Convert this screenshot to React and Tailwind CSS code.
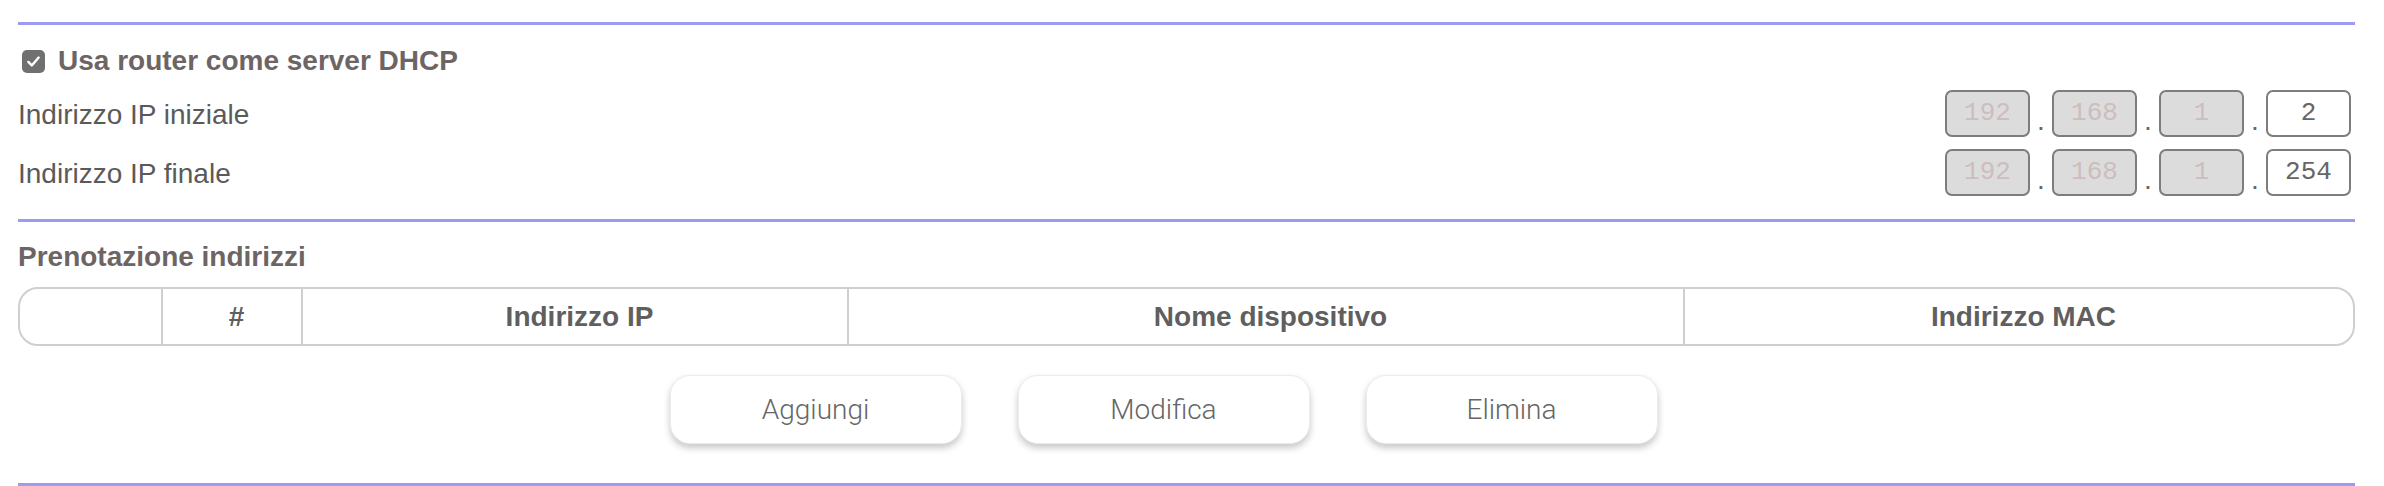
import React from "react"

const ranges = [
  { label: "Indirizzo IP iniziale", parts: ["192", "168", "1", "2"] },
  { label: "Indirizzo IP finale", parts: ["192", "168", "1", "254"] },
]

const columns = ["", "#", "Indirizzo IP", "Nome dispositivo", "Indirizzo MAC"]

function IpBox({ value, disabled }) {
  return (
    <div
      className={`w-[85px] h-[47px] flex items-center justify-center rounded-[7px] border-2 border-[#7d7d7d] text-[26px] ${
        disabled ? "bg-[#dcdcdc] text-[#cdbdbd]" : "bg-white text-[#666666]"
      }`}
      style={{ fontFamily: '"Liberation Mono", monospace' }}
    >
      {value}
    </div>
  )
}

function Divider({ className = "" }) {
  return <div className={`h-[3px] bg-[#9d9bef] ${className}`} />
}

export default function App() {
  return (
    <div
      className="w-full bg-white pt-[22px] pl-[18px] pr-[29px] text-[28px] text-[#5a5a5a]"
      style={{ fontFamily: '"Liberation Sans", Arial, sans-serif' }}
    >
      <Divider />

      {/* dhcp toggle */}
      <div className="mt-[18px] h-[36px] flex items-center">
        <div className="ml-[4px] w-[23px] h-[23px] rounded-[5px] bg-[#707070] flex items-center justify-center">
          <svg width="15" height="15" viewBox="0 0 16 16" fill="none">
            <path d="M2.5 8.5 L6.2 12.2 L13.5 3.8" stroke="white" strokeWidth="2.6" strokeLinecap="round" strokeLinejoin="round" />
          </svg>
        </div>
        <span className="ml-[13px] font-bold text-[#6d6464] leading-none">Usa router come server DHCP</span>
      </div>

      {ranges.map((r, i) => (
        <div key={r.label} className={`${i === 0 ? "mt-[11px]" : "mt-[12px]"} h-[47px] flex items-center justify-between`}>
          <span className="leading-none pt-[2px]">{r.label}</span>
          <div className="flex items-center mr-[4px]">
            {r.parts.map((p, j) => (
              <React.Fragment key={j}>
                {j > 0 && <span className="w-[22px] self-end pb-[2px] text-center text-[#666] leading-none">.</span>}
                <IpBox value={p} disabled={j < 3} />
              </React.Fragment>
            ))}
          </div>
        </div>
      ))}

      <Divider className="mt-[23px]" />

      <div className="mt-[17px] h-[36px] flex items-center">
        <span className="font-bold text-[#6d6464] leading-none">Prenotazione indirizzi</span>
      </div>

      {/* reservation table */}
      <div className="mt-[12px] h-[59px] rounded-[20px] border-2 border-[#cfcfcf] grid grid-cols-[141px_140px_546px_836px_1fr] overflow-hidden">
        {columns.map((c, i) => (
          <div
            key={i}
            className={`flex items-center justify-center pl-[9px] font-bold text-[#5f5f5f] leading-none ${i > 0 ? "border-l-2 border-[#cfcfcf]" : ""}`}
          >
            {c}
          </div>
        ))}
      </div>

      <div className="mt-[29px] flex justify-center gap-[56px] pr-[46px]">
        {["Aggiungi", "Modifica", "Elimina"].map((b) => (
          <button
            key={b}
            className="w-[292px] h-[69px] rounded-[20px] bg-white border border-[#ececec] shadow-[0_4px_7px_rgba(0,0,0,0.22)] text-[28px] font-light text-[#666666]"
            style={{ fontFamily: 'Roboto, "Liberation Sans", sans-serif' }}
          >
            {b}
          </button>
        ))}
      </div>

      <Divider className="mt-[39px]" />
    </div>
  )
}
